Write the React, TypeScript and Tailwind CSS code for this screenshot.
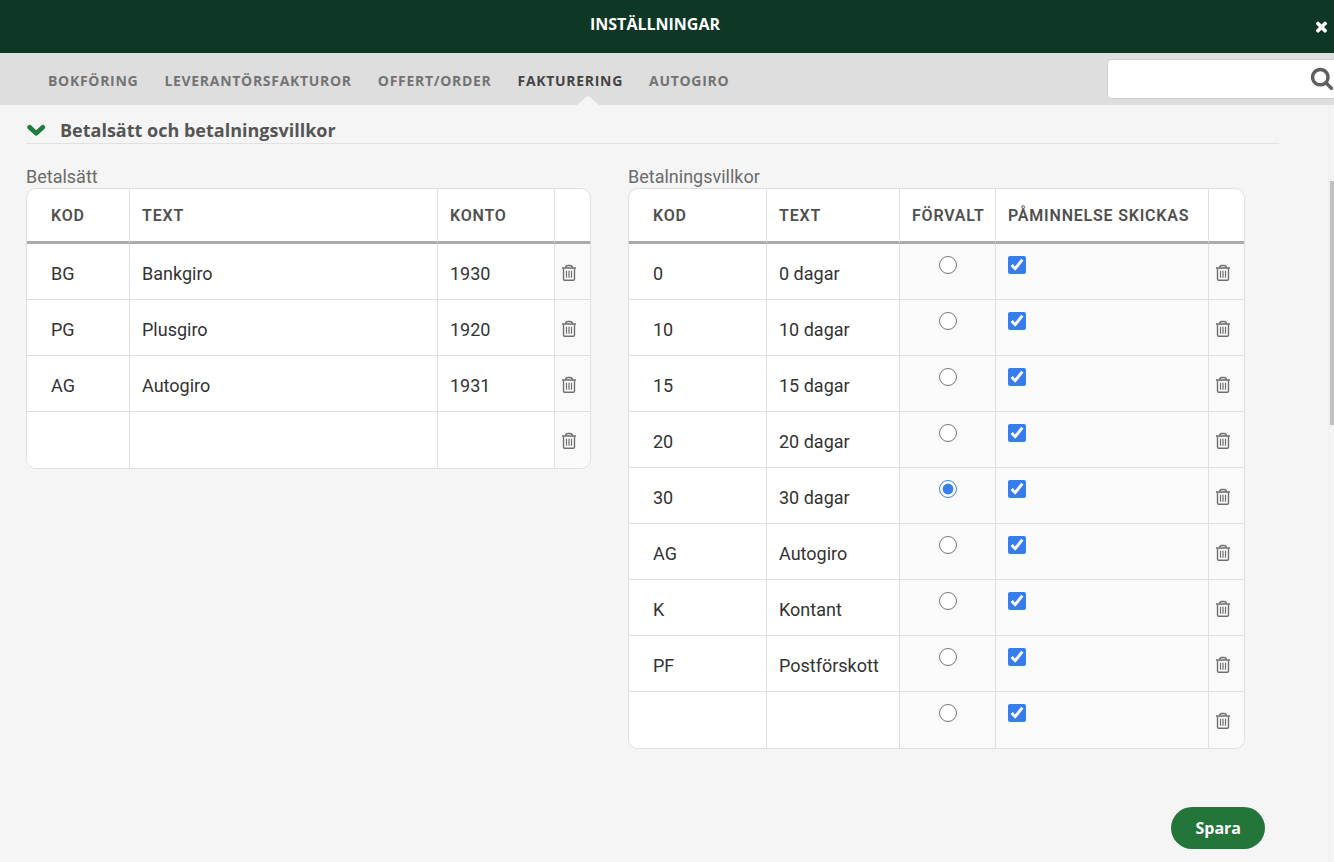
import React, { useState } from "react";

const tabs = ["Bokföring", "Leverantörsfakturor", "Offert/Order", "Fakturering", "Autogiro"];

const methods = [
  { code: "BG", text: "Bankgiro", account: "1930" },
  { code: "PG", text: "Plusgiro", account: "1920" },
  { code: "AG", text: "Autogiro", account: "1931" },
  { code: "", text: "", account: "" },
];

const terms = [
  { code: "0", text: "0 dagar" },
  { code: "10", text: "10 dagar" },
  { code: "15", text: "15 dagar" },
  { code: "20", text: "20 dagar" },
  { code: "30", text: "30 dagar" },
  { code: "AG", text: "Autogiro" },
  { code: "K", text: "Kontant" },
  { code: "PF", text: "Postförskott" },
  { code: "", text: "" },
];

const headingFont = "font-['Open_Sans',sans-serif]";

const TrashIcon = () => (
  <svg width="16" height="18" viewBox="0 0 16 18" fill="none" stroke="#6e6e6e" strokeWidth="1.4">
    <path d="M1 4h14" strokeWidth="1.6" />
    <path d="M4.600 3.800Q5 1.500 6.800 1.500h2.400Q11 1.500 11.400 3.800" />
    <path d="M2.500 4.500v10.600q0 1.200 1.200 1.200h8.600q1.200 0 1.200-1.200V4.500" />
    <path d="M5.500 6.800v7M8 6.800v7M10.500 6.800v7" strokeWidth="1.200" />
  </svg>
);

const HeadCell = ({ children, first }: any) => (
  <th
    scope="col"
    className={`h-[55px] border-b-3 border-b-[#ababab] border-r border-r-[#e0e0e0] pt-0.5 text-left text-base font-semibold tracking-wider text-[#505050] last:border-r-0 ${
      first ? "pl-6" : "pl-3"
    }`}
  >
    {children}
  </th>
);

const TextCell = ({ value, label, first }: any) => (
  <td className="h-14 border-r border-b border-[#e0e0e0] bg-white p-0 group-last:border-b-0">
    <input
      type="text"
      defaultValue={value}
      aria-label={label}
      className={`block h-full w-full bg-transparent pt-1 text-lg text-[#333] outline-none ${first ? "pl-6" : "pl-3"}`}
    />
  </td>
);

const TrashCell = () => (
  <td className="h-14 border-b border-[#e0e0e0] bg-[#fafafa] p-0 group-last:border-b-0">
    <button type="button" aria-label="Ta bort" className="flex h-full w-full cursor-pointer items-center pt-0.5 pl-1.5">
      <TrashIcon />
    </button>
  </td>
);

const App = () => {
  const [selected, setSelected] = useState(4);

  return (
    <div className="flex min-h-screen flex-col bg-[#f5f5f5] font-[Roboto,sans-serif]">
      <header className="relative flex h-[53px] items-center justify-center bg-[#0e3726] pr-6 pb-1.5">
        <h1 className={`text-base font-bold text-white ${headingFont}`}>INSTÄLLNINGAR</h1>
        <button type="button" aria-label="Stäng" className="absolute top-[18px] right-1 cursor-pointer">
          <svg width="17" height="17" viewBox="0 0 1792 1792" fill="#fff">
            <path d="M1490 1322q0 40-28 68l-136 136q-28 28-68 28t-68-28l-294-294-294 294q-28 28-68 28t-68-28l-136-136q-28-28-28-68t28-68l294-294-294-294q-28-28-28-68t28-68l136-136q28-28 68-28t68 28l294 294 294-294q28-28 68-28t68 28l136 136q28 28 28 68t-28 68l-294 294 294 294q28 28 28 68z" />
          </svg>
        </button>
      </header>

      <nav className="flex h-[52px] items-center justify-between overflow-hidden bg-[#dedede] pl-12">
        <ul className={`flex h-full gap-[26px] text-sm font-bold tracking-wider uppercase ${headingFont}`}>
          {tabs.map((tab) => (
            <li key={tab} className="relative flex items-center pt-1">
              <a href="#" className={tab === "Fakturering" ? "text-[#444]" : "text-[#737373]"}>
                {tab}
              </a>
              {tab === "Fakturering" && (
                <svg className="absolute right-6 bottom-0" width="22" height="9" viewBox="0 0 22 9" fill="#f5f5f5">
                  <path d="M0 9L9.500 0.800Q11-0.200 12.500 0.800L22 9z" />
                </svg>
              )}
            </li>
          ))}
        </ul>
        <div className="relative -mr-1 w-[231px]">
          <input
            type="search"
            aria-label="Sök"
            className="block h-10 w-full rounded-sm border border-[#cfcfcf] bg-white pr-8 pl-3 text-base outline-none"
          />
          <svg className="absolute top-[7px] right-1" width="24" height="24" viewBox="0 0 1792 1792" fill="#5f5f5f">
            <path d="M1216 832q0-185-131.500-316.500t-316.500-131.500-316.500 131.500-131.500 316.500 131.500 316.500 316.500 131.500 316.500-131.500 131.500-316.500zm512 832q0 52-38 90t-90 38q-54 0-90-38l-343-342q-179 124-399 124-143 0-273.500-55.500t-225-150-150-225-55.500-273.500 55.500-273.500 150-225 225-150 273.500-55.500 273.500 55.500 225 150 150 225 55.500 273.500q0 220-124 399l343 343q37 37 37 90z" />
          </svg>
        </div>
      </nav>

      <div className="flex flex-1">
        <main className="flex-1 pr-[49px] pl-[26px]">
          <h2 className={`border-b border-[#e2e2e2] pt-[13px] pb-px text-lg font-bold text-[#555] ${headingFont}`}>
            <button type="button" className="flex h-6 cursor-pointer items-center gap-3.5">
              <svg width="20" height="14" viewBox="0 0 20 14" fill="none" stroke="#217a3e" strokeWidth="4.600" strokeLinecap="round" strokeLinejoin="round">
                <path d="M3.600 4.200L10.200 10.400l6.600-6.200" />
              </svg>
              Betalsätt och betalningsvillkor
            </button>
          </h2>

          <div className="mt-[22px] grid grid-cols-[565fr_617fr] items-start gap-[37px] pr-[34px]">
            <section>
              <h3 className="text-lg leading-[22px] text-[#6b6b6b]">Betalsätt</h3>
              <div className="overflow-hidden rounded-[10px] border border-[#e0e0e0] bg-white">
                <table className="w-full table-fixed border-separate border-spacing-0">
                  <colgroup>
                    <col className="w-[103px]" />
                    <col />
                    <col className="w-[117px]" />
                    <col className="w-[35px]" />
                  </colgroup>
                  <thead>
                    <tr>
                      <HeadCell first>KOD</HeadCell>
                      <HeadCell>TEXT</HeadCell>
                      <HeadCell>KONTO</HeadCell>
                      <HeadCell />
                    </tr>
                  </thead>
                  <tbody>
                    {methods.map((method, index) => (
                      <tr key={index} className="group">
                        <TextCell first value={method.code} label="Kod" />
                        <TextCell value={method.text} label="Text" />
                        <TextCell value={method.account} label="Konto" />
                        <TrashCell />
                      </tr>
                    ))}
                  </tbody>
                </table>
              </div>
            </section>

            <section>
              <h3 className="text-lg leading-[22px] text-[#6b6b6b]">Betalningsvillkor</h3>
              <div className="overflow-hidden rounded-[10px] border border-[#e0e0e0] bg-white">
                <table className="w-full table-fixed border-separate border-spacing-0">
                  <colgroup>
                    <col className="w-[138px]" />
                    <col className="w-[133px]" />
                    <col className="w-24" />
                    <col />
                    <col className="w-[35px]" />
                  </colgroup>
                  <thead>
                    <tr>
                      <HeadCell first>KOD</HeadCell>
                      <HeadCell>TEXT</HeadCell>
                      <HeadCell>FÖRVALT</HeadCell>
                      <HeadCell>PÅMINNELSE SKICKAS</HeadCell>
                      <HeadCell />
                    </tr>
                  </thead>
                  <tbody>
                    {terms.map((term, index) => (
                      <tr key={index} className="group">
                        <TextCell first value={term.code} label="Kod" />
                        <TextCell value={term.text} label="Text" />
                        <td className="border-r border-b border-[#e0e0e0] bg-[#fafafa] p-0 pt-3 align-top group-last:border-b-0">
                          <input
                            type="radio"
                            name="default-term"
                            aria-label="Förvalt"
                            checked={selected === index}
                            onChange={() => setSelected(index)}
                            className="mx-auto block size-[18px] accent-[#377dee]"
                          />
                        </td>
                        <td className="border-r border-b border-[#e0e0e0] bg-[#fafafa] p-0 pt-3 pl-3 align-top group-last:border-b-0">
                          <input
                            type="checkbox"
                            defaultChecked
                            aria-label="Påminnelse skickas"
                            className="block size-[18px] accent-[#377dee]"
                          />
                        </td>
                        <TrashCell />
                      </tr>
                    ))}
                  </tbody>
                </table>
              </div>
            </section>
          </div>

          <div className="flex justify-end pt-[58px] pr-3.5 pb-3">
            <button
              type="button"
              className={`h-[42px] cursor-pointer rounded-full bg-[#23753a] px-6 text-base font-bold text-white ${headingFont}`}
            >
              Spara
            </button>
          </div>
        </main>

        {/* Scroll track */}
        <div className="w-1.5 border-l border-[#efefef] bg-[#f3f3f3] pt-[76px] pl-px">
          <div className="h-61 bg-[#c1c1c1]" />
        </div>
      </div>
    </div>
  );
};

export default App;
